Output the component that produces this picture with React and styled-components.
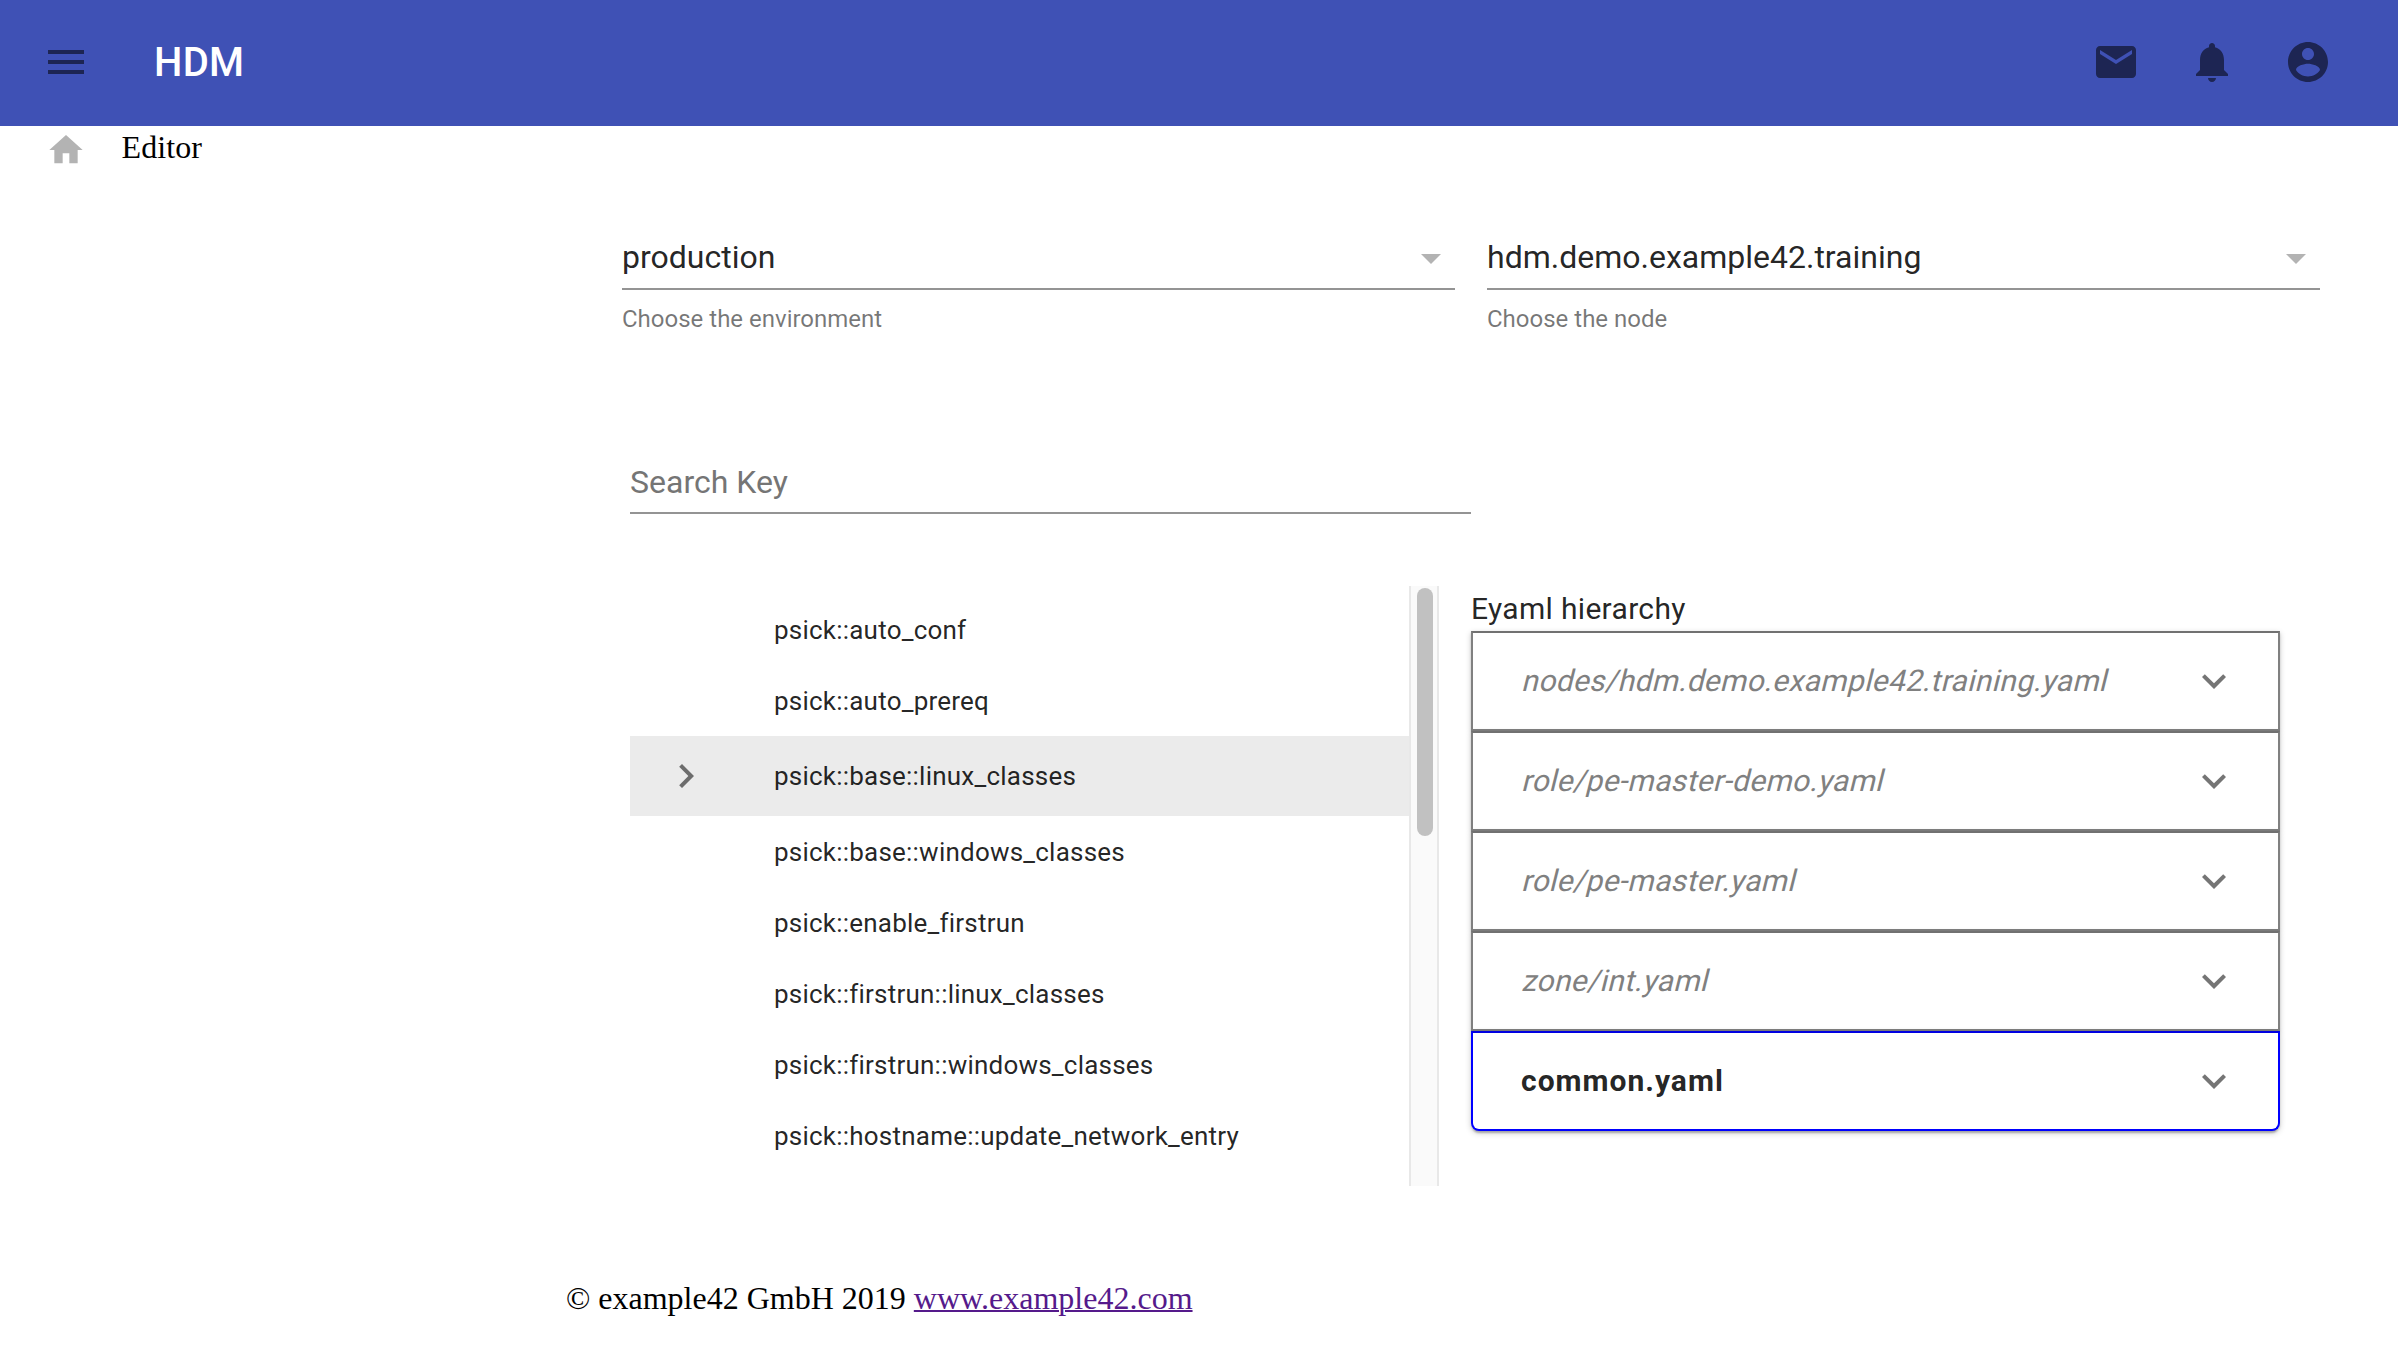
import React from 'react';
import styled, { createGlobalStyle, css } from 'styled-components';

const GlobalStyle = createGlobalStyle`
  *, *::before, *::after { box-sizing: border-box; }
  body {
    margin: 0;
    background: #fff;
    font-family: Roboto, sans-serif;
    color: rgba(0, 0, 0, 0.87);
  }
`;

const AppBar = styled.header`
  display: flex;
  align-items: center;
  height: 126px;
  padding: 0 66px 2px 42px;
  background: #3f51b5;
`;

const Icon = styled.svg`
  display: block;
  flex: none;
  width: ${(p) => p.$size || 48}px;
  height: ${(p) => p.$size || 48}px;
  fill: ${(p) => p.$color || 'rgba(0, 0, 0, 0.54)'};
`;

const Brand = styled.h1`
  flex: 1;
  margin: 0 0 0 64px;
  padding-top: 2px;
  font-size: 40px;
  line-height: 48px;
  font-weight: 500;
  letter-spacing: 0.3px;
  color: #fff;
`;

const Actions = styled.div`
  display: flex;
  gap: 48px;
`;

const Breadcrumb = styled.nav`
  display: flex;
  height: 44px;
  padding: 4px 0 0 46px;
  gap: 35.5px;
  color: #000;
  font: 32px/34px 'Liberation Serif', serif;
`;

const Crumb = styled.span`
  height: 34px;
  letter-spacing: 0.1px;
`;

const Selectors = styled.section`
  display: flex;
  gap: 32px;
  margin: 60px 0 0 622px;
`;

const Field = styled.div`
  width: ${(p) => p.$width}px;
`;

const Control = styled.div`
  display: flex;
  align-items: center;
  justify-content: space-between;
  height: 60px;
  padding-bottom: ${(p) => (p.$placeholder ? 2 : 4)}px;
  border-bottom: 2px solid #949494;
  font-size: 32px;
  line-height: 38px;
  color: ${(p) => (p.$placeholder ? '#757575' : 'rgba(0, 0, 0, 0.87)')};

  ${Icon} {
    margin-top: 2px;
  }
`;

const Helper = styled.div`
  margin-top: 16px;
  font-size: 24px;
  line-height: 26px;
  color: rgba(0, 0, 0, 0.54);
`;

const SearchArea = styled.section`
  margin: 122px 0 0 630px;
`;

const Workspace = styled.main`
  display: flex;
  align-items: flex-start;
  gap: 32px;
  height: 600px;
  margin: 72px 0 0 630px;
`;

const KeyPane = styled.div`
  display: flex;
  width: 809px;
  height: 600px;
`;

const KeyList = styled.ul`
  flex: 1;
  margin: 0;
  padding: 8px 0 0;
  list-style: none;
`;

const KeyRow = styled.li`
  display: flex;
  align-items: center;
  height: ${(p) => (p.$active ? 80 : 71)}px;
  padding-left: 32px;
  background: ${(p) => (p.$active ? '#ebebeb' : 'transparent')};
`;

const RowMarker = styled.span`
  width: 112px;
`;

const KeyName = styled.span`
  font-size: 26px;
  line-height: 38px;
  letter-spacing: 0.22px;
`;

const ScrollTrack = styled.div`
  width: 30px;
  padding: 2px 4px 0 6px;
  background: #fafafa;
  border: solid #e8e8e8;
  border-width: 0 2px;
`;

const ScrollThumb = styled.div`
  width: 16px;
  height: 248px;
  border-radius: 8px;
  background: #c1c1c1;
`;

const Hierarchy = styled.section`
  width: 809px;
`;

const HierarchyTitle = styled.h2`
  margin: 0;
  padding-top: 5px;
  height: 45px;
  font-size: 30px;
  line-height: 36px;
  font-weight: 400;
  letter-spacing: 0.32px;
`;

const Panel = styled.div`
  display: flex;
  align-items: center;
  justify-content: space-between;
  height: 100px;
  padding: 0 40px 0 48px;
  background: #fff;
  border: 2px solid ${(p) => (p.$present ? '#0000ff' : '#808080')};
  border-top-color: ${(p) => (p.$present ? '#0000e0' : '#717171')};
  box-shadow: 0 2px 6px rgba(0, 0, 0, 0.2), 0 2px 2px rgba(0, 0, 0, 0.14),
    0 4px 2px -2px rgba(0, 0, 0, 0.12);

  &:last-child {
    border-radius: 0 0 8px 8px;
  }
`;

const FileName = styled.span`
  font-size: 30px;
  line-height: 36px;
  ${(p) =>
    p.$present
      ? css`
          font-weight: 700;
          letter-spacing: 1px;
        `
      : css`
          color: #808080;
          letter-spacing: 0.31px;
          transform: skewX(-14deg);
          transform-origin: 0 28px;
        `}
`;

const Footer = styled.footer`
  margin: 94px 0 0 566px;
  color: #000;
  font: 32px/36px 'Liberation Serif', serif;
`;

const FooterLink = styled.a`
  color: #551a8b;
  text-decoration: underline;
  text-decoration-thickness: 2px;
`;

const paths = {
  menu: 'M3 18h18v-2H3v2zm0-5h18v-2H3v2zm0-7v2h18V6H3z',
  mail: 'M20 4H4c-1.1 0-1.99.9-1.99 2L2 18c0 1.1.9 2 2 2h16c1.1 0 2-.9 2-2V6c0-1.1-.9-2-2-2zm0 4l-8 5-8-5V6l8 5 8-5v2z',
  bell: 'M12 22c1.1 0 2-.9 2-2h-4c0 1.1.89 2 2 2zm6-6v-5c0-3.07-1.64-5.64-4.5-6.32V4c0-.83-.67-1.5-1.5-1.5s-1.5.67-1.5 1.5v.68C7.63 5.36 6 7.92 6 11v5l-2 2v1h16v-1l-2-2z',
  account:
    'M12 2C6.48 2 2 6.48 2 12s4.48 10 10 10 10-4.48 10-10S17.52 2 12 2zm0 3c1.66 0 3 1.34 3 3s-1.34 3-3 3-3-1.34-3-3 1.34-3 3-3zm0 14.2c-2.5 0-4.71-1.28-6-3.22.03-1.99 4-3.08 6-3.08 1.99 0 5.97 1.09 6 3.08-1.29 1.94-3.5 3.22-6 3.22z',
  home: 'M10 20v-6h4v6h5v-8h3L12 3 2 12h3v8z',
  dropdown: 'M7 10l5 5 5-5z',
  right: 'M10 6L8.59 7.41 13.17 12l-4.58 4.59L10 18l6-6z',
  down: 'M16.59 8.59L12 13.17 7.41 8.59 6 10l6 6 6-6z',
};

const Glyph = ({ name, size, color }) => (
  <Icon viewBox="0 0 24 24" $size={size} $color={color} aria-hidden="true">
    <path d={paths[name]} />
  </Icon>
);

const selectors = [
  { value: 'production', helper: 'Choose the environment' },
  { value: 'hdm.demo.example42.training', helper: 'Choose the node' },
];

const keys = [
  'psick::auto_conf',
  'psick::auto_prereq',
  'psick::base::linux_classes',
  'psick::base::windows_classes',
  'psick::enable_firstrun',
  'psick::firstrun::linux_classes',
  'psick::firstrun::windows_classes',
  'psick::hostname::update_network_entry',
];
const activeKey = 'psick::base::linux_classes';

const files = [
  { name: 'nodes/hdm.demo.example42.training.yaml' },
  { name: 'role/pe-master-demo.yaml' },
  { name: 'role/pe-master.yaml' },
  { name: 'zone/int.yaml' },
  { name: 'common.yaml', present: true },
];

export default function App() {
  return (
    <>
      <GlobalStyle />
      <AppBar>
        <Glyph name="menu" />
        <Brand>HDM</Brand>
        <Actions>
          <Glyph name="mail" />
          <Glyph name="bell" />
          <Glyph name="account" />
        </Actions>
      </AppBar>
      <Breadcrumb>
        <Glyph name="home" size={40} color="#b3b3b3" />
        <Crumb>Editor</Crumb>
      </Breadcrumb>
      <Selectors>
        {selectors.map((s) => (
          <Field key={s.value} $width={833}>
            <Control>
              {s.value}
              <Glyph name="dropdown" color="#b3b3b3" />
            </Control>
            <Helper>{s.helper}</Helper>
          </Field>
        ))}
      </Selectors>
      <SearchArea>
        <Field $width={841}>
          <Control $placeholder>Search Key</Control>
        </Field>
      </SearchArea>
      <Workspace>
        <KeyPane>
          <KeyList>
            {keys.map((k) => (
              <KeyRow key={k} $active={k === activeKey}>
                <RowMarker>{k === activeKey && <Glyph name="right" />}</RowMarker>
                <KeyName>{k}</KeyName>
              </KeyRow>
            ))}
          </KeyList>
          <ScrollTrack>
            <ScrollThumb />
          </ScrollTrack>
        </KeyPane>
        <Hierarchy>
          <HierarchyTitle>Eyaml hierarchy</HierarchyTitle>
          <div>
            {files.map((f) => (
              <Panel key={f.name} $present={f.present}>
                <FileName $present={f.present}>{f.name}</FileName>
                <Glyph name="down" />
              </Panel>
            ))}
          </div>
        </Hierarchy>
      </Workspace>
      <Footer>
        © example42 GmbH 2019 <FooterLink href="#">www.example42.com</FooterLink>
      </Footer>
    </>
  );
}
